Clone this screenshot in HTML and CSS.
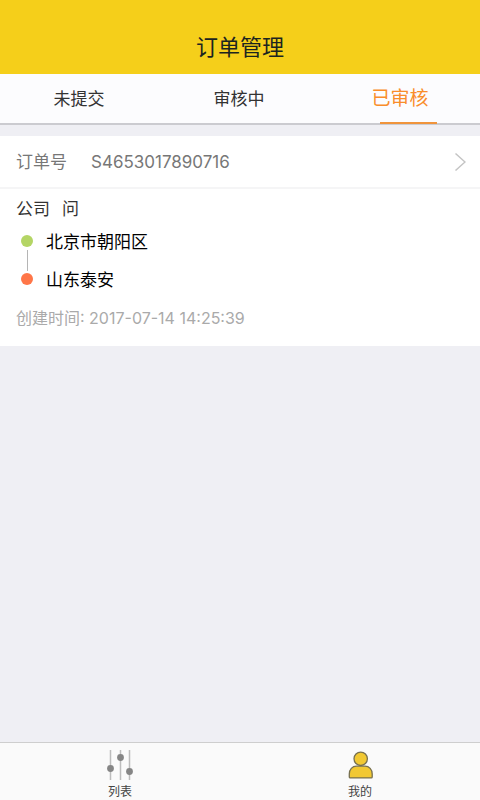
FILE: index.html
```html
<!DOCTYPE html>
<html lang="zh-CN">
<head>
<meta charset="utf-8">
<meta name="viewport" content="width=device-width, initial-scale=1">
<title>订单管理</title>
<link rel="stylesheet" href="styles.css">
</head>
<body>
<header class="header"><h1>订单管理</h1></header>
<nav class="tabs">
  <button class="tab" type="button">未提交</button>
  <button class="tab" type="button">审核中</button>
  <button class="tab tab-active" type="button">已审核</button>
</nav>
<main class="content">
  <article class="order">
    <a class="order-head" href="#order">
      <span class="order-label">订单号</span>
      <span class="order-number">S4653017890716</span>
      <svg class="chevron" viewBox="0 0 12 20" aria-hidden="true"><path d="M1.500 1.500 11 10 1.500 18.500"/></svg>
    </a>
    <div class="order-body">
      <p class="company"><span>公司</span><span>问</span></p>
      <ul class="route">
        <li class="stop stop-start">北京市朝阳区</li>
        <li class="stop stop-end">山东泰安</li>
      </ul>
      <p class="created">创建时间: 2017-07-14 14:25:39</p>
    </div>
  </article>
</main>
<nav class="bottom-bar">
  <a class="bottom-item" href="#list">
    <svg class="bottom-icon" viewBox="0 0 28 32" aria-hidden="true">
      <g stroke="#bcbcbc" stroke-width="1.5"><path d="M4.5 1v30M14.5 1v30M23.5 1v30"/></g>
      <g fill="#858585"><circle cx="4.5" cy="19.5" r="3.4"/><circle cx="14.5" cy="8.5" r="3.4"/><circle cx="23.5" cy="22.5" r="3.4"/></g>
    </svg>
    <span>列表</span>
  </a>
  <a class="bottom-item" href="#mine">
    <svg class="bottom-icon" viewBox="0 0 28 32" aria-hidden="true">
      <g fill="#f1c832" stroke="#77704f" stroke-width="1.300"><path d="M3.300 28v-3c0-4.500 3-7.800 7.200-7.800h8.500c4.200 0 7.200 3.300 7.200 7.800v3q0 .9-.9 .9H4.200q-.9 0-.9-.9z"/><circle cx="14.700" cy="9.800" r="6.700"/></g>
    </svg>
    <span>我的</span>
  </a>
</nav>
</body>
</html>
```
FILE: styles.css
```css
* {
  box-sizing: border-box;
}

body {
  display: flex;
  flex-direction: column;
  min-height: 100vh;
  margin: 0;
  background: #efeff4;
  color: #333;
  font-family: Inter, "Noto Sans CJK SC", sans-serif;
  font-size: 17px;
  line-height: 24px;
}

h1,
p,
ul {
  margin: 0;
  padding: 0;
}

a {
  color: inherit;
  text-decoration: none;
}

.header {
  padding: 31px 16px 11px;
  background: #f5cf1a;
  text-align: center;
}

.header h1 {
  color: #1b2420;
  font-size: 22px;
  font-weight: 400;
  line-height: 32px;
}

.tabs {
  display: grid;
  grid-template-columns: repeat(3, 1fr);
  border-bottom: 2px solid #cbcbd0;
  background: #fcfcfe;
}

.tab {
  position: relative;
  height: 49px;
  padding: 0 2px 0 0;
  border: 0;
  background: none;
  color: #333;
  font: inherit;
}

.tab-active {
  padding: 0;
  color: #f98d2b;
  font-size: 19px;
}

.tab-active::after {
  content: "";
  position: absolute;
  bottom: -1px;
  left: 60px;
  width: 57px;
  height: 2px;
  background: #f0943c;
}

.content {
  flex: 1;
  padding-top: 11px;
}

.order {
  background: #fff;
}

.order-head {
  display: flex;
  align-items: center;
  gap: 24px;
  padding: 14px 14px 13px 16px;
  border-bottom: 2px solid #f5f5f6;
  color: #777;
}

.order-number {
  flex: 1;
}

.chevron {
  width: 12px;
  height: 20px;
  fill: none;
  stroke: #c4c4c4;
  stroke-width: 1.5;
}

.order-body {
  padding: 8px 16px 16px;
}

.company {
  display: flex;
  gap: 12px;
}

.route {
  display: grid;
  gap: 14px;
  margin-top: 9px;
  color: #000;
  list-style: none;
}

.stop {
  position: relative;
  padding-left: 30px;
}

.stop::before {
  content: "";
  position: absolute;
  top: 5px;
  left: 5px;
  width: 12px;
  height: 12px;
  border-radius: 50%;
  background: #b4d565;
}

.stop-end::before {
  background: #ff7648;
}

.stop-start::after {
  content: "";
  position: absolute;
  top: 20px;
  left: 11px;
  width: 1px;
  height: 21px;
  background: #b5b5b5;
}

.created {
  margin-top: 14px;
  color: #aaa;
  font-size: 16px;
}

.bottom-bar {
  display: grid;
  grid-template-columns: repeat(2, 1fr);
  border-top: 1px solid #cecece;
  background: #fafafa;
}

.bottom-item {
  display: flex;
  flex-direction: column;
  align-items: center;
  gap: 3px;
  padding-top: 6px;
  color: #444;
  font-size: 12px;
  line-height: 16px;
}

.bottom-icon {
  width: 28px;
  height: 32px;
}
```
